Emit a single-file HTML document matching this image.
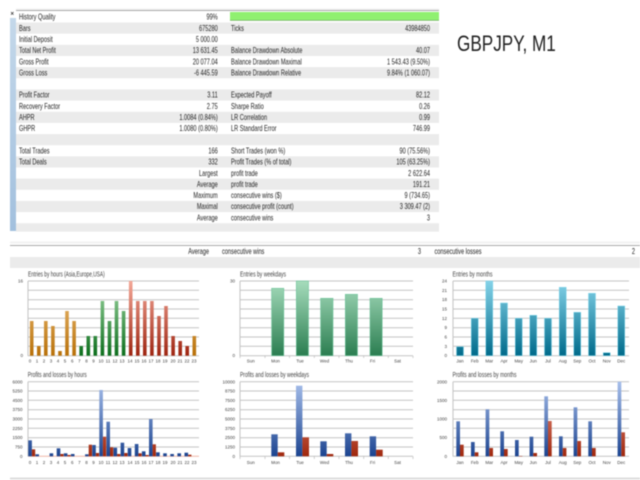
<!DOCTYPE html>
<html><head><meta charset="utf-8"><title>GBPJPY, M1</title>
<style>
html,body{margin:0;padding:0;background:#fff;width:640px;height:480px;overflow:hidden}
svg{display:block;filter:blur(.5px)}
text{font-family:"Liberation Sans",sans-serif}
.t text{font-size:7.8px;fill:#222}
.a text{font-size:4.5px;fill:#444;text-anchor:middle}
.y text{font-size:4.5px;fill:#444;text-anchor:end}
.h{font-size:7px;fill:#444}
.g line{stroke:#c4c4c4;stroke-width:1}
.k line{stroke:#bbb;stroke-width:.7}
</style></head><body>
<svg width="640" height="480" viewBox="0 0 640 480" xmlns="http://www.w3.org/2000/svg">
<defs>
<linearGradient id="side" x1="0" y1="0" x2="0" y2="1"><stop offset="0" stop-color="#c4d8ea"/><stop offset="1" stop-color="#a2c0de"/></linearGradient>
<linearGradient id="or" gradientUnits="userSpaceOnUse" x1="0" y1="281" x2="0" y2="356"><stop offset="0" stop-color="#f2c684"/><stop offset="1" stop-color="#b87008"/></linearGradient>
<linearGradient id="gr" gradientUnits="userSpaceOnUse" x1="0" y1="281" x2="0" y2="356"><stop offset="0" stop-color="#a0d8a4"/><stop offset="1" stop-color="#0c6e1c"/></linearGradient>
<linearGradient id="rd" gradientUnits="userSpaceOnUse" x1="0" y1="281" x2="0" y2="356"><stop offset="0" stop-color="#f4a898"/><stop offset="1" stop-color="#9e2410"/></linearGradient>
<linearGradient id="wk" gradientUnits="userSpaceOnUse" x1="0" y1="281" x2="0" y2="356"><stop offset="0" stop-color="#a6dcbc"/><stop offset="1" stop-color="#2a7d50"/></linearGradient>
<linearGradient id="mo" gradientUnits="userSpaceOnUse" x1="0" y1="281" x2="0" y2="356"><stop offset="0" stop-color="#84d2e8"/><stop offset="1" stop-color="#006a8a"/></linearGradient>
<linearGradient id="bl" gradientUnits="userSpaceOnUse" x1="0" y1="381" x2="0" y2="456"><stop offset="0" stop-color="#a8c0ec"/><stop offset="1" stop-color="#1c4490"/></linearGradient>
<linearGradient id="re" gradientUnits="userSpaceOnUse" x1="0" y1="381" x2="0" y2="456"><stop offset="0" stop-color="#f4a090"/><stop offset="1" stop-color="#a0280e"/></linearGradient>
</defs>

<!-- top table -->
<rect x="10" y="18" width="6" height="213" fill="url(#side)"/>
<g fill="#ebebeb">
<rect x="16" y="22.5" width="423" height="11.15"/><rect x="16" y="44.85" width="423" height="11.15"/><rect x="16" y="67.15" width="423" height="11.15"/><rect x="16" y="89.45" width="423" height="11.15"/><rect x="16" y="111.75" width="423" height="11.15"/><rect x="16" y="134.05" width="423" height="11.15"/><rect x="16" y="156.35" width="423" height="11.15"/><rect x="16" y="178.65" width="423" height="11.15"/><rect x="16" y="200.95" width="423" height="11.15"/><rect x="16" y="223.25" width="423" height="8.4"/>
</g>
<rect x="16" y="8.3" width="423" height="1.7" fill="#f4f4f4"/>
<rect x="16" y="10" width="423" height="1" fill="#aaa"/>
<rect x="230" y="12" width="209" height="8.5" fill="#90f070"/>
<rect x="230" y="20" width="209" height=".7" fill="#66a858"/>
<text x="10.5" y="15.5" style="font-size:6px;font-weight:bold;fill:#333">×</text>

<g class="t" transform="translate(19,0) scale(.72,1)">
<text y="19.7">History Quality</text><text y="30.85">Bars</text><text y="42">Initial Deposit</text><text y="53.15">Total Net Profit</text><text y="64.3">Gross Profit</text><text y="75.45">Gross Loss</text><text y="97.75">Profit Factor</text><text y="108.9">Recovery Factor</text><text y="120.05">AHPR</text><text y="131.2">GHPR</text><text y="153.5">Total Trades</text><text y="164.65">Total Deals</text>
</g>
<g class="t" transform="translate(217.7,0) scale(.72,1)" text-anchor="end">
<text y="19.7">99%</text><text y="30.85">675280</text><text y="42">5 000.00</text><text y="53.15">13 631.45</text><text y="64.3">20 077.04</text><text y="75.45">-6 445.59</text><text y="97.75">3.11</text><text y="108.9">2.75</text><text y="120.05">1.0084 (0.84%)</text><text y="131.2">1.0080 (0.80%)</text><text y="153.5">166</text><text y="164.65">332</text><text y="175.8">Largest</text><text y="186.95">Average</text><text y="198.1">Maximum</text><text y="209.25">Maximal</text><text y="220.4">Average</text>
</g>
<g class="t" transform="translate(231,0) scale(.72,1)">
<text y="30.85">Ticks</text><text y="53.15">Balance Drawdown Absolute</text><text y="64.3">Balance Drawdown Maximal</text><text y="75.45">Balance Drawdown Relative</text><text y="97.75">Expected Payoff</text><text y="108.9">Sharpe Ratio</text><text y="120.05">LR Correlation</text><text y="131.2">LR Standard Error</text><text y="153.5">Short Trades (won %)</text><text y="164.65">Profit Trades (% of total)</text><text y="175.8">profit trade</text><text y="186.95">profit trade</text><text y="198.1">consecutive wins ($)</text><text y="209.25">consecutive profit (count)</text><text y="220.4">consecutive wins</text>
</g>
<g class="t" transform="translate(430,0) scale(.72,1)" text-anchor="end">
<text y="30.85">43984850</text><text y="53.15">40.07</text><text y="64.3">1 543.43 (9.50%)</text><text y="75.45">9.84% (1 060.07)</text><text y="97.75">82.12</text><text y="108.9">0.26</text><text y="120.05">0.99</text><text y="131.2">746.99</text><text y="153.5">90 (75.56%)</text><text y="164.65">105 (63.25%)</text><text y="175.8">2 622.64</text><text y="186.95">191.21</text><text y="198.1">9 (734.65)</text><text y="209.25">3 309.47 (2)</text><text y="220.4">3</text>
</g>

<text transform="translate(457,51) scale(.78,1)" style="font-size:22px;fill:#222">GBPJPY, M1</text>

<!-- middle strip -->
<rect x="10" y="241.5" width="630" height="2" fill="#f2f2f2"/>
<rect x="10" y="245" width="630" height="1" fill="#aaa"/>
<rect x="10" y="257" width="630" height="11" fill="#ebebeb"/>
<g class="t" text-anchor="end">
<text transform="translate(209,254) scale(.72,1)">Average</text>
<text transform="translate(421,254) scale(.72,1)">3</text>
<text transform="translate(635,254) scale(.72,1)">2</text>
</g>
<g class="t" text-anchor="start">
<text transform="translate(222,254) scale(.72,1)">consecutive wins</text>
<text transform="translate(434.5,254) scale(.72,1)">consecutive losses</text>
</g>
<rect x="10" y="477.5" width="630" height="2" fill="#ddd"/>

<!-- titles -->
<text class="h" x="28" y="276.5" textLength="76.7" lengthAdjust="spacingAndGlyphs">Entries by hours (Asia,Europe,USA)</text>
<text class="h" x="240" y="276.5" textLength="46" lengthAdjust="spacingAndGlyphs">Entries by weekdays</text>
<text class="h" x="452.5" y="276.5" textLength="40" lengthAdjust="spacingAndGlyphs">Entries by months</text>
<text class="h" x="27.7" y="377" textLength="59" lengthAdjust="spacingAndGlyphs">Profits and losses by hours</text>
<text class="h" x="240" y="377" textLength="69" lengthAdjust="spacingAndGlyphs">Profits and losses by weekdays</text>
<text class="h" x="452.5" y="377" textLength="64" lengthAdjust="spacingAndGlyphs">Profits and losses by months</text>

<!-- gridlines -->
<g class="g">
<line x1="28" x2="199" y1="281" y2="281"/><line x1="28" x2="199" y1="290.3" y2="290.3"/><line x1="28" x2="199" y1="299.7" y2="299.7"/><line x1="28" x2="199" y1="309" y2="309"/><line x1="28" x2="199" y1="318.3" y2="318.3"/><line x1="28" x2="199" y1="327.7" y2="327.7"/><line x1="28" x2="199" y1="337" y2="337"/><line x1="28" x2="199" y1="346.3" y2="346.3"/><line x1="28" x2="199" y1="355.7" y2="355.7"/><line x1="28" x2="28" y1="281" y2="356"/>
<line x1="240" x2="413" y1="281" y2="281"/><line x1="240" x2="413" y1="290.3" y2="290.3"/><line x1="240" x2="413" y1="299.7" y2="299.7"/><line x1="240" x2="413" y1="309" y2="309"/><line x1="240" x2="413" y1="318.3" y2="318.3"/><line x1="240" x2="413" y1="327.7" y2="327.7"/><line x1="240" x2="413" y1="337" y2="337"/><line x1="240" x2="413" y1="346.3" y2="346.3"/><line x1="240" x2="413" y1="355.7" y2="355.7"/><line x1="240" x2="240" y1="281" y2="356"/>
<line x1="453" x2="629" y1="281" y2="281"/><line x1="453" x2="629" y1="290.3" y2="290.3"/><line x1="453" x2="629" y1="299.7" y2="299.7"/><line x1="453" x2="629" y1="309" y2="309"/><line x1="453" x2="629" y1="318.3" y2="318.3"/><line x1="453" x2="629" y1="327.7" y2="327.7"/><line x1="453" x2="629" y1="337" y2="337"/><line x1="453" x2="629" y1="346.3" y2="346.3"/><line x1="453" x2="629" y1="355.7" y2="355.7"/><line x1="453" x2="453" y1="281" y2="356"/>
<line x1="28" x2="199" y1="381.7" y2="381.7"/><line x1="28" x2="199" y1="391" y2="391"/><line x1="28" x2="199" y1="400.3" y2="400.3"/><line x1="28" x2="199" y1="409.7" y2="409.7"/><line x1="28" x2="199" y1="419" y2="419"/><line x1="28" x2="199" y1="428.3" y2="428.3"/><line x1="28" x2="199" y1="437.7" y2="437.7"/><line x1="28" x2="199" y1="447" y2="447"/><line x1="28" x2="199" y1="456.3" y2="456.3" style="stroke:#f0b8a8"/><line x1="28" x2="28" y1="381.7" y2="456.5"/>
<line x1="240" x2="413" y1="381.7" y2="381.7"/><line x1="240" x2="413" y1="391" y2="391"/><line x1="240" x2="413" y1="400.3" y2="400.3"/><line x1="240" x2="413" y1="409.7" y2="409.7"/><line x1="240" x2="413" y1="419" y2="419"/><line x1="240" x2="413" y1="428.3" y2="428.3"/><line x1="240" x2="413" y1="437.7" y2="437.7"/><line x1="240" x2="413" y1="447" y2="447"/><line x1="240" x2="413" y1="456.3" y2="456.3"/><line x1="240" x2="240" y1="381.7" y2="456.5"/>
<line x1="453" x2="629" y1="381.7" y2="381.7"/><line x1="453" x2="629" y1="391" y2="391"/><line x1="453" x2="629" y1="400.3" y2="400.3"/><line x1="453" x2="629" y1="409.7" y2="409.7"/><line x1="453" x2="629" y1="419" y2="419"/><line x1="453" x2="629" y1="428.3" y2="428.3"/><line x1="453" x2="629" y1="437.7" y2="437.7"/><line x1="453" x2="629" y1="447" y2="447"/><line x1="453" x2="629" y1="456.3" y2="456.3"/><line x1="453" x2="453" y1="381.7" y2="456.5"/>
</g>

<!-- ticks -->
<g class="k">
<line x1="240" x2="240" y1="356" y2="358"/><line x1="265" x2="265" y1="356" y2="358"/><line x1="289.5" x2="289.5" y1="356" y2="358"/><line x1="314.3" x2="314.3" y1="356" y2="358"/><line x1="339" x2="339" y1="356" y2="358"/><line x1="363.7" x2="363.7" y1="356" y2="358"/><line x1="388.3" x2="388.3" y1="356" y2="358"/><line x1="413" x2="413" y1="356" y2="358"/>
<line x1="240" x2="240" y1="456.5" y2="459"/><line x1="265" x2="265" y1="456.5" y2="459"/><line x1="289.5" x2="289.5" y1="456.5" y2="459"/><line x1="314.3" x2="314.3" y1="456.5" y2="459"/><line x1="339" x2="339" y1="456.5" y2="459"/><line x1="363.7" x2="363.7" y1="456.5" y2="459"/><line x1="388.3" x2="388.3" y1="456.5" y2="459"/><line x1="413" x2="413" y1="456.5" y2="459"/>
</g>

<!-- chart 1 -->
<g fill="url(#or)">
<rect x="29.9" y="321" width="3.6" height="34.7"/><rect x="37" y="346" width="3.6" height="9.7"/><rect x="44" y="321" width="3.6" height="34.7"/><rect x="51.1" y="326" width="3.6" height="29.7"/><rect x="58.2" y="351" width="3.6" height="4.7"/><rect x="65.2" y="311" width="3.6" height="44.7"/><rect x="72.3" y="321" width="3.6" height="34.7"/><rect x="192.5" y="336" width="3.6" height="19.7"/>
</g>
<g fill="url(#gr)">
<rect x="79.4" y="346" width="3.6" height="9.7"/><rect x="86.5" y="336" width="3.6" height="19.7"/><rect x="93.5" y="336" width="3.6" height="19.7"/><rect x="100.6" y="301" width="3.6" height="54.7"/><rect x="107.7" y="321" width="3.6" height="34.7"/><rect x="114.7" y="301" width="3.6" height="54.7"/><rect x="121.8" y="311" width="3.6" height="44.7"/>
</g>
<g fill="url(#rd)">
<rect x="128.9" y="281" width="3.6" height="74.7"/><rect x="136" y="301" width="3.6" height="54.7"/><rect x="143" y="301" width="3.6" height="54.7"/><rect x="150.1" y="301" width="3.6" height="54.7"/><rect x="157.2" y="316" width="3.6" height="39.7"/><rect x="164.2" y="306" width="3.6" height="49.7"/><rect x="171.3" y="336" width="3.6" height="19.7"/><rect x="178.4" y="341" width="3.6" height="14.7"/><rect x="185.4" y="346" width="3.6" height="9.7"/>
</g>

<!-- chart 2 -->
<g fill="url(#wk)" stroke="#6cc49a" stroke-width=".6">
<rect x="271.6" y="288.3" width="12.2" height="67.4"/><rect x="296.3" y="281" width="12.2" height="74.7"/><rect x="320.6" y="298.3" width="12.4" height="57.4"/><rect x="345.3" y="294.3" width="12.2" height="61.4"/><rect x="370" y="298.3" width="12.2" height="57.4"/>
</g>

<!-- chart 3 -->
<g fill="url(#mo)" stroke="#7cd4ea" stroke-width=".5">
<rect x="456.5" y="346.7" width="7" height="9"/><rect x="471.2" y="318.3" width="7" height="37.4"/><rect x="485.8" y="281" width="7" height="74.7"/><rect x="500.5" y="303" width="7" height="52.7"/><rect x="515.2" y="318.3" width="7" height="37.4"/><rect x="529.8" y="315.3" width="7" height="40.4"/><rect x="544.5" y="318.3" width="7" height="37.4"/><rect x="559.2" y="287.3" width="7" height="68.4"/><rect x="573.8" y="312.3" width="7" height="43.4"/><rect x="588.5" y="293.3" width="7" height="62.4"/><rect x="603.2" y="352.7" width="7" height="3"/><rect x="617.8" y="306" width="7" height="49.7"/>
</g>

<!-- chart 4 -->
<g fill="url(#bl)">
<rect x="28.3" y="440.3" width="3.6" height="16"/><rect x="35.4" y="454.3" width="3.6" height="2"/><rect x="49.6" y="453.3" width="3.6" height="3"/><rect x="56.7" y="448.3" width="3.6" height="8"/><rect x="63.8" y="453.3" width="3.6" height="3"/><rect x="70.9" y="454" width="3.6" height="2.3"/><rect x="85.1" y="454.3" width="3.6" height="2"/><rect x="92.2" y="445" width="3.6" height="11.3"/><rect x="99.3" y="390" width="3.6" height="66.3"/><rect x="106.4" y="421.7" width="3.6" height="34.6"/><rect x="113.5" y="447.7" width="3.6" height="8.6"/><rect x="120.6" y="442.7" width="3.6" height="13.6"/><rect x="127.7" y="448" width="3.6" height="8.3"/><rect x="134.8" y="444" width="3.6" height="12.3"/><rect x="141.9" y="451.3" width="3.6" height="5"/><rect x="149" y="419" width="3.6" height="37.3"/><rect x="156.1" y="452.3" width="3.6" height="4"/><rect x="163.2" y="453.3" width="3.6" height="3"/><rect x="170.3" y="454" width="3.6" height="2.3"/><rect x="177.4" y="453.3" width="3.6" height="3"/><rect x="184.5" y="452.7" width="3.6" height="3.6"/>
</g>
<g fill="url(#re)">
<rect x="31.9" y="449.3" width="3.3" height="7"/><rect x="60.3" y="454" width="3.3" height="2.3"/><rect x="67.4" y="455" width="3.3" height="1.3"/><rect x="88.7" y="444.7" width="3.3" height="11.6"/><rect x="95.8" y="453" width="3.3" height="3.3"/><rect x="102.9" y="436.7" width="3.3" height="19.6"/><rect x="110" y="447.3" width="3.3" height="9"/><rect x="117.1" y="454" width="3.3" height="2.3"/><rect x="124.2" y="453" width="3.3" height="3.3"/><rect x="138.4" y="453.3" width="3.3" height="3"/><rect x="145.5" y="455" width="3.3" height="1.3"/><rect x="152.6" y="444.3" width="3.3" height="12"/><rect x="188.1" y="454.7" width="3.3" height="1.6"/>
</g>

<!-- chart 5 -->
<g fill="url(#bl)">
<rect x="271.3" y="434.3" width="6.4" height="22"/><rect x="296" y="385.7" width="6.4" height="70.6"/><rect x="320.3" y="441.3" width="6.4" height="15"/><rect x="345" y="433.3" width="6.4" height="23"/><rect x="369.7" y="436.3" width="6.4" height="20"/>
</g>
<g fill="url(#re)">
<rect x="277.7" y="452.3" width="6.6" height="4"/><rect x="302.4" y="437.3" width="6.6" height="19"/><rect x="326.7" y="454" width="6.6" height="2.3"/><rect x="351.4" y="441" width="6.6" height="15.3"/><rect x="376.1" y="449.7" width="6.6" height="6.6"/>
</g>

<!-- chart 6 -->
<g fill="url(#bl)">
<rect x="456.3" y="421.3" width="3.7" height="35"/><rect x="471" y="442" width="3.7" height="14.3"/><rect x="485.6" y="409.3" width="3.7" height="47"/><rect x="500.3" y="431.3" width="3.7" height="25"/><rect x="515" y="440" width="3.7" height="16.3"/><rect x="529.6" y="436.7" width="3.7" height="19.6"/><rect x="544.3" y="396.3" width="3.7" height="60"/><rect x="559" y="436.3" width="3.7" height="20"/><rect x="573.6" y="407.3" width="3.7" height="49"/><rect x="588.3" y="421.3" width="3.7" height="35"/><rect x="617.6" y="381.7" width="3.7" height="74.6"/>
</g>
<g fill="url(#re)">
<rect x="460" y="444.7" width="3.7" height="11.6"/><rect x="474.7" y="452.3" width="3.7" height="4"/><rect x="489.3" y="448" width="3.7" height="8.3"/><rect x="504" y="449" width="3.7" height="7.3"/><rect x="518.7" y="456" width="3.7" height=".4"/><rect x="533.3" y="453" width="3.7" height="3.3"/><rect x="548" y="421" width="3.7" height="35.3"/><rect x="562.7" y="448" width="3.7" height="8.3"/><rect x="577.3" y="441" width="3.7" height="15.3"/><rect x="592" y="448" width="3.7" height="8.3"/><rect x="621.3" y="432.3" width="3.7" height="24"/>
</g>

<!-- y labels -->
<g class="y">
<text x="23" y="282.5">16</text><text x="23" y="357">0</text>
<text x="235" y="282.5">30</text><text x="235" y="357">0</text>
<text x="447" y="282.5">24</text><text x="447" y="292">21</text><text x="447" y="301">18</text><text x="447" y="310.5">15</text><text x="447" y="320">12</text><text x="447" y="329">9</text><text x="447" y="338.5">6</text><text x="447" y="348">3</text><text x="447" y="357">0</text>
<text x="22.5" y="383.5">6000</text><text x="22.5" y="392.5">5250</text><text x="22.5" y="402">4500</text><text x="22.5" y="411">3750</text><text x="22.5" y="420.5">3000</text><text x="22.5" y="430">2250</text><text x="22.5" y="439">1500</text><text x="22.5" y="448.5">750</text><text x="22.5" y="458">0</text>
<text x="235" y="383.5">10000</text><text x="235" y="392.5">8750</text><text x="235" y="402">7500</text><text x="235" y="411">6250</text><text x="235" y="420.5">5000</text><text x="235" y="430">3750</text><text x="235" y="439">2500</text><text x="235" y="448.5">1250</text><text x="235" y="458">0</text>
<text x="447" y="383.5">2000</text><text x="447" y="402">1500</text><text x="447" y="420.5">1000</text><text x="447" y="439">500</text><text x="447" y="458">0</text>
</g>

<!-- x labels -->
<g class="a">
<text x="30" y="362.5">0</text><text x="37" y="362.5">1</text><text x="44" y="362.5">2</text><text x="51" y="362.5">3</text><text x="58" y="362.5">4</text><text x="65" y="362.5">5</text><text x="72.3" y="362.5">6</text><text x="79.4" y="362.5">7</text><text x="86.5" y="362.5">8</text><text x="93.5" y="362.5">9</text><text x="101" y="362.5">10</text><text x="108" y="362.5">11</text><text x="115" y="362.5">12</text><text x="122" y="362.5">13</text><text x="130" y="362.5">14</text><text x="137" y="362.5">15</text><text x="144" y="362.5">16</text><text x="151" y="362.5">17</text><text x="158" y="362.5">18</text><text x="165" y="362.5">19</text><text x="173" y="362.5">20</text><text x="180" y="362.5">21</text><text x="187" y="362.5">22</text><text x="194" y="362.5">23</text>
<text x="250.7" y="362.5">Sun</text><text x="275.5" y="362.5">Mon</text><text x="300" y="362.5">Tue</text><text x="324.5" y="362.5">Wed</text><text x="349" y="362.5">Thu</text><text x="372.5" y="362.5">Fri</text><text x="397.5" y="362.5">Sat</text>
<text x="460" y="362.5">Jan</text><text x="474.7" y="362.5">Feb</text><text x="489.3" y="362.5">Mar</text><text x="504" y="362.5">Apr</text><text x="518.7" y="362.5">May</text><text x="533.3" y="362.5">Jun</text><text x="548" y="362.5">Jul</text><text x="562.7" y="362.5">Aug</text><text x="577.3" y="362.5">Sep</text><text x="592" y="362.5">Oct</text><text x="606.7" y="362.5">Nov</text><text x="621.3" y="362.5">Dec</text>
<text x="30" y="464">0</text><text x="37" y="464">1</text><text x="44" y="464">2</text><text x="51" y="464">3</text><text x="58" y="464">4</text><text x="65" y="464">5</text><text x="72.3" y="464">6</text><text x="79.4" y="464">7</text><text x="86.5" y="464">8</text><text x="93.5" y="464">9</text><text x="101" y="464">10</text><text x="108" y="464">11</text><text x="115" y="464">12</text><text x="122" y="464">13</text><text x="130" y="464">14</text><text x="137" y="464">15</text><text x="144" y="464">16</text><text x="151" y="464">17</text><text x="158" y="464">18</text><text x="165" y="464">19</text><text x="173" y="464">20</text><text x="180" y="464">21</text><text x="187" y="464">22</text><text x="194" y="464">23</text>
<text x="250.7" y="464">Sun</text><text x="275.5" y="464">Mon</text><text x="300" y="464">Tue</text><text x="324.5" y="464">Wed</text><text x="349" y="464">Thu</text><text x="372.5" y="464">Fri</text><text x="397.5" y="464">Sat</text>
<text x="460" y="464">Jan</text><text x="474.7" y="464">Feb</text><text x="489.3" y="464">Mar</text><text x="504" y="464">Apr</text><text x="518.7" y="464">May</text><text x="533.3" y="464">Jun</text><text x="548" y="464">Jul</text><text x="562.7" y="464">Aug</text><text x="577.3" y="464">Sep</text><text x="592" y="464">Oct</text><text x="606.7" y="464">Nov</text><text x="621.3" y="464">Dec</text>
</g>
</svg>
</body></html>
